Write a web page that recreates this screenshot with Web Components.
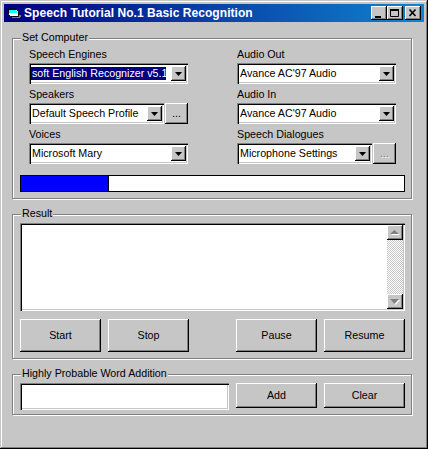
<!DOCTYPE html>
<html>
<head>
<meta charset="utf-8">
<title>Speech Tutorial</title>
<style>
  html, body { margin: 0; padding: 0; background: #c6c6c6; }
  body { font: 10.7px/14px "Liberation Sans", Arial, sans-serif; color: #000; }
  .row { display: flex; justify-content: space-between; }
  .cluster { display: flex; gap: 7px; }
  .fields { display: grid; grid-template-columns: 159px 159px; justify-content: space-between; padding: 0 9px 0 9px; width: 367px; grid-auto-rows: 40px; }
  .inline { display: flex; gap: 1px; }
  .inline win-combo { flex: 1; }
</style>
</head>
<body>
<win-window caption="Speech Tutorial No.1 Basic Recognition">
  <win-group label="Set Computer" style="padding-top:5px">
    <div class="fields">
      <win-field label="Speech Engines"><win-combo selected>soft English Recognizer v5.1</win-combo></win-field>
      <win-field label="Audio Out"><win-combo>Avance AC'97 Audio</win-combo></win-field>
      <win-field label="Speakers"><div class="inline"><win-combo>Default Speech Profile</win-combo><win-button width="23" height="21">...</win-button></div></win-field>
      <win-field label="Audio In"><win-combo>Avance AC'97 Audio</win-combo></win-field>
      <win-field label="Voices"><win-combo>Microsoft Mary</win-combo></win-field>
      <win-field label="Speech Dialogues"><div class="inline"><win-combo>Microphone Settings</win-combo><win-button width="23" height="21" disabled>...</win-button></div></win-field>
    </div>
    <win-progress value="23" style="margin-top:11px"></win-progress>
  </win-group>
  <win-group label="Result" style="margin-top:15px;padding-top:8px">
    <win-memo></win-memo>
    <div class="row" style="margin-top:8px">
      <div class="cluster"><win-button width="81" height="33">Start</win-button><win-button width="81" height="33">Stop</win-button></div>
      <div class="cluster"><win-button width="81" height="33">Pause</win-button><win-button width="81" height="33">Resume</win-button></div>
    </div>
  </win-group>
  <win-group label="Highly Probable Word Addition" style="margin-top:15px;padding-top:8px;padding-bottom:4px">
    <div class="row">
      <win-input></win-input>
      <div class="cluster"><win-button width="81" height="25">Add</win-button><win-button width="81" height="25">Clear</win-button></div>
    </div>
  </win-group>
</win-window>

<script>
class WinWindow extends HTMLElement {
  connectedCallback() {
    const root = this.attachShadow({ mode: 'open' });
    root.innerHTML = `
      <style>
        :host {
          display: block;
          box-sizing: border-box;
          width: 428px;
          height: 449px;
          padding: 4px;
          background: #c6c6c6;
          box-shadow: inset -1px -1px 0 #000, inset 1px 1px 0 #c6c6c6, inset -2px -2px 0 #808080, inset 2px 2px 0 #fff;
        }
        #bar {
          display: flex;
          align-items: center;
          height: 18px;
          padding: 0 3px 0 4px;
          background: linear-gradient(90deg, #000080, #1084d0);
          color: #fff;
          font: bold 12px/18px "Liberation Sans", Arial, sans-serif;
          letter-spacing: 0.06px;
        }
        #bar svg { display: block; }
        #icon { flex: none; margin-right: 1px; }
        #caption { flex: 1; white-space: nowrap; }
        .cap {
          box-sizing: border-box;
          width: 16px;
          height: 14px;
          background: #c6c6c6;
          box-shadow: inset -1px -1px 0 #000, inset 1px 1px 0 #fff, inset -2px -2px 0 #808080;
          flex: none;
        }
        #max { margin-right: 2px; }
        #main { padding: 16px 8px 0 8px; }
      </style>
      <div id="bar">
        <svg id="icon" width="15" height="14" viewBox="0 0 15 14">
          <path d="M4 11h8v1H4zM10 9h3v2h-3z" fill="#808080"/>
          <path d="M0.5 3.5h8l2 2v5h-8l-2-2z" fill="#fff" stroke="#000"/>
          <path d="M1 4h7l1.500 2v1H1z" fill="#0ff"/>
          <path d="M0 2.500h8v1H0z" fill="#000"/>
        </svg>
        <span id="caption">${this.getAttribute('caption')}</span>
        <div class="cap"><svg width="16" height="14"><path d="M4 10h6v2H4z" fill="#000"/></svg></div>
        <div class="cap" id="max"><svg width="16" height="14"><path d="M3.5 4.500h8v6h-8z" fill="none" stroke="#000"/><path d="M3 3h9v2H3z" fill="#000"/></svg></div>
        <div class="cap"><svg width="16" height="14"><path d="M4.500 3.500l6 6.500M10.500 3.500l-6 6.500" stroke="#000" stroke-width="1.600" fill="none"/></svg></div>
      </div>
      <div id="main"><slot></slot></div>`;
  }
}

class WinGroup extends HTMLElement {
  connectedCallback() {
    const root = this.attachShadow({ mode: 'open' });
    root.innerHTML = `
      <style>
        :host {
          display: block;
          position: relative;
          width: 385px;
          padding: 0 6px 6px 7px;
          border: 1px solid #808080;
          box-shadow: inset 1px 1px 0 #fff, 1px 1px 0 #fff;
        }
        #label {
          position: absolute;
          left: 8px;
          top: -9px;
          padding: 0 1px 0 1px;
          background: #c6c6c6;
          line-height: 15px;
        }
      </style>
      <span id="label">${this.getAttribute('label')}</span>
      <slot></slot>`;
  }
}

class WinField extends HTMLElement {
  connectedCallback() {
    const root = this.attachShadow({ mode: 'open' });
    root.innerHTML = `
      <style>
        :host { display: block; height: 40px; }
        #label { display: block; padding: 3px 0 2px; height: 14px; line-height: 14px; }
      </style>
      <span id="label">${this.getAttribute('label')}</span>
      <slot></slot>`;
  }
}

class WinDrop extends HTMLElement {
  connectedCallback() {
    const root = this.attachShadow({ mode: 'open' });
    root.innerHTML = `
      <style>
        :host {
          display: flex;
          align-items: center;
          justify-content: center;
          box-sizing: border-box;
          width: 15px;
          height: 15px;
          flex: none;
          background: #c6c6c6;
          box-shadow: inset -1px -1px 0 #000, inset 1px 1px 0 #fff, inset -2px -2px 0 #808080;
        }
      </style>
      <svg width="7" height="4"><path d="M0 0h7L3.500 4z" fill="#000"/></svg>`;
  }
}

class WinCombo extends HTMLElement {
  connectedCallback() {
    const root = this.attachShadow({ mode: 'open' });
    root.innerHTML = `
      <style>
        :host {
          display: flex;
          align-items: center;
          box-sizing: border-box;
          height: 21px;
          padding: 3px 2px 3px 2px;
          background: #fff;
          box-shadow: inset 1px 1px 0 #808080, inset 2px 2px 0 #000, inset -1px -1px 0 #fff, inset -2px -2px 0 #c6c6c6;
          overflow: hidden;
        }
        #text {
          flex: 1;
          min-width: 0;
          margin-right: 5px;
          padding: 0 1px;
          white-space: nowrap;
          overflow: hidden;
          line-height: 13px;
        }
        :host([selected]) #text { background: #000080; color: #fff; }
      </style>
      <span id="text"><slot></slot></span>
      <win-drop></win-drop>`;
  }
}

class WinButton extends HTMLElement {
  connectedCallback() {
    const root = this.attachShadow({ mode: 'open' });
    root.innerHTML = `
      <style>
        :host {
          display: flex;
          align-items: center;
          justify-content: center;
          box-sizing: border-box;
          width: ${this.getAttribute('width')}px;
          height: ${this.getAttribute('height')}px;
          padding-bottom: 1px;
          flex: none;
          background: #c6c6c6;
          box-shadow: inset -1px -1px 0 #000, inset 1px 1px 0 #fff, inset -2px -2px 0 #808080;
        }
        :host([disabled]) { color: #808080; text-shadow: 1px 1px 0 #fff; }
      </style>
      <slot></slot>`;
  }
}

class WinProgress extends HTMLElement {
  connectedCallback() {
    const root = this.attachShadow({ mode: 'open' });
    root.innerHTML = `
      <style>
        :host {
          display: block;
          box-sizing: border-box;
          height: 17px;
          border: 1px solid #000;
          background: #fff;
        }
        #fill { height: 100%; background: #0000ff; border-right: 1px solid #000; box-sizing: border-box; }
      </style>
      <div id="fill" style="width:${this.getAttribute('value')}%"></div>`;
  }
}

class WinMemo extends HTMLElement {
  connectedCallback() {
    const root = this.attachShadow({ mode: 'open' });
    root.innerHTML = `
      <style>
        :host {
          display: flex;
          justify-content: flex-end;
          box-sizing: border-box;
          height: 88px;
          padding: 2px;
          background: #fff;
          box-shadow: inset 1px 1px 0 #808080, inset 2px 2px 0 #000, inset -1px -1px 0 #fff, inset -2px -2px 0 #c6c6c6;
        }
        #bar {
          display: flex;
          flex-direction: column;
          justify-content: space-between;
          width: 16px;
          background: repeating-conic-gradient(#fff 0 25%, #c6c6c6 0 50%) 0 0 / 2px 2px;
        }
        .arrow {
          display: flex;
          align-items: center;
          justify-content: center;
          height: 15px;
          background: #c6c6c6;
          box-shadow: inset -1px -1px 0 #000, inset 1px 1px 0 #fff, inset -2px -2px 0 #808080;
        }
        svg { display: block; }
      </style>
      <div id="bar">
        <div class="arrow"><svg width="10" height="6"><path d="M1 5h9L5.500 1z" fill="#fff"/><path d="M0 4h9L4.500 0z" fill="#808080"/></svg></div>
        <div class="arrow"><svg width="10" height="6"><path d="M1 1h9L5.500 6z" fill="#fff"/><path d="M0 0h9L4.500 5z" fill="#808080"/></svg></div>
      </div>`;
  }
}

class WinInput extends HTMLElement {
  connectedCallback() {
    const root = this.attachShadow({ mode: 'open' });
    root.innerHTML = `
      <style>
        :host {
          display: block;
          box-sizing: border-box;
          width: 209px;
          height: 27px;
          background: #fff;
          box-shadow: inset 1px 1px 0 #808080, inset 2px 2px 0 #000, inset -1px -1px 0 #fff, inset -2px -2px 0 #c6c6c6;
        }
      </style>`;
  }
}

customElements.define('win-window', WinWindow);
customElements.define('win-group', WinGroup);
customElements.define('win-field', WinField);
customElements.define('win-drop', WinDrop);
customElements.define('win-combo', WinCombo);
customElements.define('win-button', WinButton);
customElements.define('win-progress', WinProgress);
customElements.define('win-memo', WinMemo);
customElements.define('win-input', WinInput);
</script>
</body>
</html>
